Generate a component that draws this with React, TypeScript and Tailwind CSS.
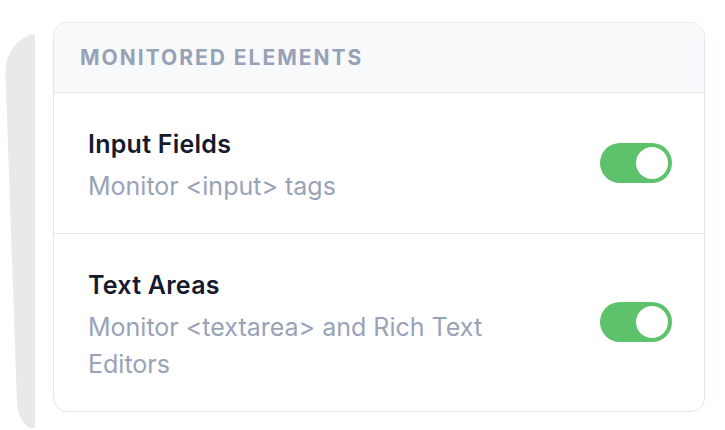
import React from "react";

function Toggle() {
  return (
    <div className="w-[72px] h-[40px] shrink-0 rounded-full bg-[#5ec16b] p-[4px] flex justify-end">
      <div className="w-[32px] h-[32px] rounded-full bg-white" />
    </div>
  );
}

function Row({ title, desc, last }: { title: string; desc: string; last?: boolean }) {
  return (
    <div
      className={
        "flex items-center justify-between pl-[34px] pr-[32px] py-[27px] " +
        (last ? "" : "border-b border-[#e3e7ee]")
      }
    >
      <div className="max-w-[440px]">
        <div className="text-[25px] leading-[48px] font-semibold tracking-[0.01em] text-[#151b2c]">{title}</div>
        <div className="text-[25px] leading-[37.5px] text-[#98a3b7]">{desc}</div>
      </div>
      <Toggle />
    </div>
  );
}

export default function App() {
  return (
    <div
      className="w-[725px] h-[430px] bg-white flex items-start overflow-hidden"
      style={{ fontFamily: "Inter, 'Noto Sans', sans-serif" }}
    >
      <div className="mt-[34px] w-[35px] h-[394px] overflow-hidden relative shrink-0">
        <div className="absolute left-[4px] top-[-4px] w-[80px] h-[402px] bg-[#e9e9e9] rounded-tl-[40px] rounded-bl-[30px] -rotate-2 origin-top-right" />
      </div>
      <div className="ml-[18px] mt-[22px] w-[652px] rounded-[14px] border border-[#e3e7ee] overflow-hidden bg-white">
        <div className="bg-[#f8f9fb] border-b border-[#e3e7ee] pl-[26px] py-[20px]">
          <div className="text-[21px] leading-[29px] font-bold tracking-[2px] text-[#97a2b6]">
            MONITORED ELEMENTS
          </div>
        </div>
        <Row title="Input Fields" desc="Monitor <input> tags" />
        <Row title="Text Areas" desc="Monitor <textarea> and Rich Text Editors" last />
      </div>
    </div>
  );
}
